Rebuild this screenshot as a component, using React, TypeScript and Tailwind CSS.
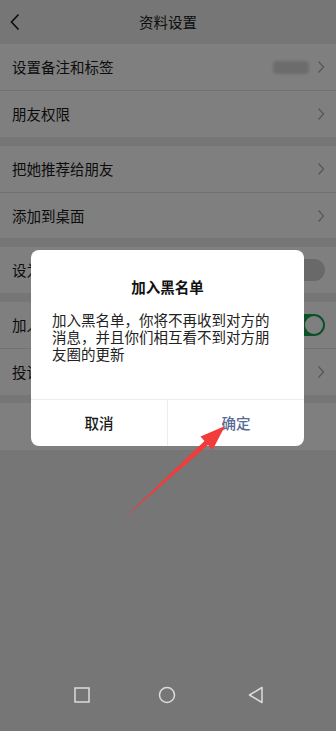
import React from "react";

const font = { fontFamily: '"Noto Sans CJK SC", "Noto Sans", sans-serif' };

function Chevron() {
  return (
    <svg width="8" height="14" viewBox="0 0 8 14" className="shrink-0">
      <path d="M1.5 1.5 L6.5 7 L1.5 12.5" fill="none" stroke="#b2b2b2" strokeWidth="1.4" />
    </svg>
  );
}

function Row({ label, right, h = "h-[47px]", border = false }: { label: string; right?: React.ReactNode; h?: string; border?: boolean }) {
  return (
    <div className={`bg-white ${h} flex items-center pl-3 pr-[11px] ${border ? "border-b border-[#e5e5e5]" : ""}`}>
      <span className="text-[14.5px] text-[#181818] flex-1">{label}</span>
      {right ?? <Chevron />}
    </div>
  );
}

export default function App() {
  return (
    <div className="relative w-[336px] h-[731px] overflow-hidden bg-[#ededed]" style={font}>
      {/* header */}
      <div className="h-[44px] flex items-center justify-center relative">
        <svg width="12" height="18" viewBox="0 0 12 18" className="absolute left-[9px] top-[13px]">
          <path d="M9.5 1.5 L2.5 9 L9.5 16.5" fill="none" stroke="#181818" strokeWidth="1.6" />
        </svg>
        <span className="text-[14.5px] text-[#181818]">资料设置</span>
      </div>
      <Row label="设置备注和标签" border right={
        <div className="flex items-center gap-[8px]">
          <div className="w-[36px] h-[13px] rounded-[4px] bg-[#d8d8d8] blur-[1.5px]" />
          <Chevron />
        </div>
      } />
      <Row label="朋友权限" h="h-[46px]" />
      <div className="h-[9px]" />
      <Row label="把她推荐给朋友" border />
      <Row label="添加到桌面" h="h-[45px]" />
      <div className="h-[9px]" />
      <Row label="设为星标朋友" h="h-[46px]" right={
        <div className="w-[48px] h-[22px] rounded-full bg-[#d3d3d3]" />
      } />
      <div className="h-[9px]" />
      <Row label="加入黑名单" border right={
        <div className="w-[48px] h-[22px] rounded-full bg-[#16a34a] border-[2px] border-[#16a34a] flex justify-end">
          <div className="w-[18px] h-[18px] rounded-full bg-white" />
        </div>
      } />
      <Row label="投诉" h="h-[46px]" />
      <div className="h-[8px]" />
      <div className="bg-white h-[47px] flex items-center justify-center">
        <span className="text-[14.5px] text-[#fa5151]">删除</span>
      </div>

      {/* dim overlay */}
      <div className="absolute inset-0 bg-black/50" />

      {/* dialog */}
      <div className="absolute left-[31px] top-[250px] w-[273px] bg-white rounded-[8px] overflow-hidden">
        <div className="pt-[27px] px-[21px] pb-[37px]">
          <div className="text-center text-[14.5px] leading-[20px] font-bold text-[#111]">加入黑名单</div>
          <p className="mt-[14px] w-[222px] text-[14.5px] leading-[17px] text-[#222]">
            加入黑名单，你将不再收到对方的消息，并且你们相互看不到对方朋友圈的更新
          </p>
        </div>
        <div className="h-[47px] border-t border-[#ececec] flex">
          <div className="flex-1 flex items-center justify-center border-r border-[#ececec] text-[14.5px] font-medium text-[#181818]">取消</div>
          <div className="flex-1 flex items-center justify-center text-[14.5px] font-medium text-[#576b95]">确定</div>
        </div>
      </div>

      {/* red arrow annotation */}
      <svg className="absolute inset-0 pointer-events-none" width="336" height="731" viewBox="0 0 336 731">
        <polygon
          points="123,519 204.5,441 200.5,436.5 225,426 212.5,450 208,445"
          fill="#f23b3b"
        />
      </svg>

      {/* nav bar */}
      <div className="absolute left-0 right-0 bottom-0 h-[50px] flex items-center">
        <svg className="absolute left-[74px] top-[6px]" width="16" height="16" viewBox="0 0 16 16">
          <rect x="1" y="1" width="14" height="14" fill="none" stroke="#dcdcdc" strokeWidth="1.5" />
        </svg>
        <svg className="absolute left-[158px] top-[5px]" width="18" height="18" viewBox="0 0 18 18">
          <circle cx="9" cy="9" r="7.5" fill="none" stroke="#dcdcdc" strokeWidth="1.5" />
        </svg>
        <svg className="absolute left-[248px] top-[5px]" width="16" height="18" viewBox="0 0 16 18">
          <path d="M14 1.5 L14 16.5 L1.5 9 Z" fill="none" stroke="#dcdcdc" strokeWidth="1.5" strokeLinejoin="round" />
        </svg>
      </div>
    </div>
  );
}
